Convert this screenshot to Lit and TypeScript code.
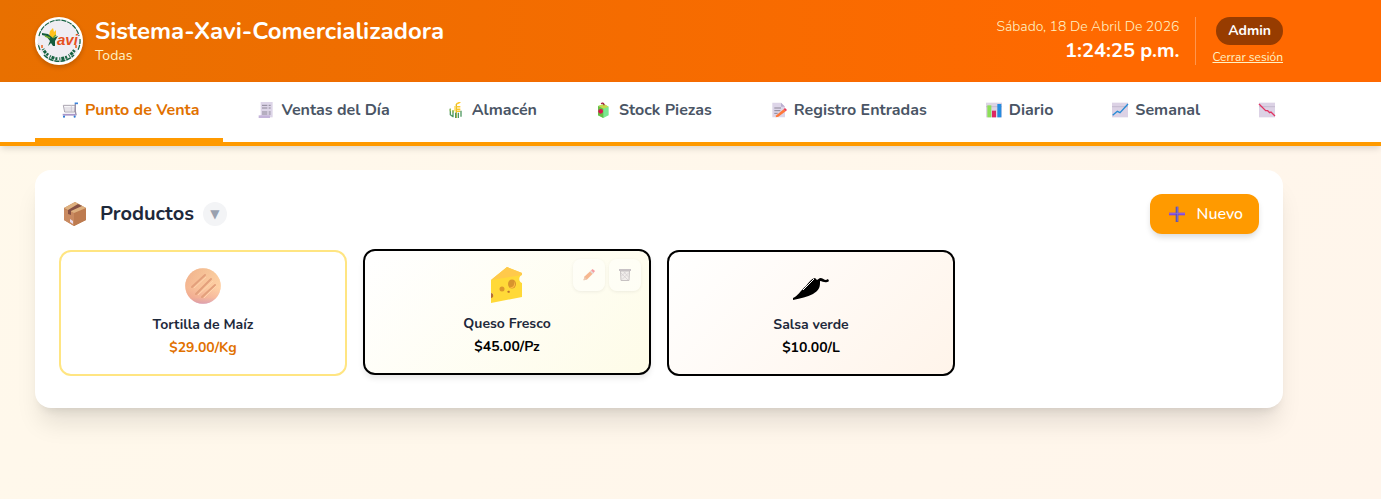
import { LitElement, html, css, svg, nothing } from "lit";
import { customElement, property, state } from "lit/decorators.js";

const art: Record<string, unknown> = {
  cart: svg`<path d="M2 5h18l-1 10H4z" fill="#f8f7f9" stroke="#aaa4b0" stroke-width="1.500"/><path d="M3 9h16M4 12h15M14 5v10" stroke="#c9c4cf" stroke-width="1.200"/><path d="M20 3v11l1 5H3" fill="none" stroke="#9b93a8" stroke-width="2"/><path d="M19 2h5" stroke="#3a83dc" stroke-width="2.500"/><path d="M1 19h20" stroke="#a997c9" stroke-width="2.500"/><circle cx="3" cy="22" r="1.600" fill="#2f7bd4"/><circle cx="19" cy="22" r="1.600" fill="#2f7bd4"/>`,
  receipt: svg`<path d="M4 0h18v23H4z" fill="#ddd5e8"/><path d="M1 20h17v4H1z" fill="#c4b4da"/><path d="M6 5h8M16 5h3M6 9h8M16 9h3M6 15h8M16 15h3M6 18h8M16 18h3" stroke="#8d8798" stroke-width="1.500"/>`,
  wheat: svg`<path d="M11 24V3" stroke="#d7b936" stroke-width="2"/><path d="M11 3l6-3M11 7h6M11 11h6M11 14h6" stroke="#ffc928" stroke-width="2.200"/><path d="M9 6v8" stroke="#ffd94b" stroke-width="2"/><path d="M2 10v9l4 3M6 13v10M10 16v8M14 16v8M18 13v9" fill="none" stroke="#4f9962" stroke-width="2"/><path d="M2 10v4M6 12v4" stroke="#9abf4c" stroke-width="2"/>`,
  box: svg`<path d="M3 6l9-3 7 4v13l-8 4-8-4z" fill="#79e890"/><path d="M3 6l9-3 7 4-8 3z" fill="#c7d94b"/><path d="M3 6l8 4v14l-8-4z" fill="#67bd46"/><circle cx="7" cy="14" r="3.500" fill="#d9154e"/><path d="M8 3c1-2 4-2 4 2" fill="none" stroke="#a41b3b" stroke-width="2"/>`,
  memo: svg`<path d="M2 1h13l6 6v16H2z" fill="#ddd5e8"/><path d="M15 1v6h6z" fill="#bbaed0"/><path d="M5 9h10M5 13h9M5 17h5" stroke="#8d8798" stroke-width="1.500"/><path d="M8 20l11-9 3 3-11 8-4 1z" fill="#ff783a"/><path d="M19 11l2-2 3 3-2 2z" fill="#ed3655"/>`,
  bars: svg`<path d="M0 1h24v22H0z" fill="#dcd4e4"/><path d="M0 7h24" stroke="#b9afc5"/><path d="M2 5h6v18H2z" fill="#8ddf58"/><path d="M9 13h6v10H9z" fill="#dc2762"/><path d="M17 3h6v20h-6z" fill="#258ce0"/>`,
  up: svg`<path d="M0 1h24v22H0z" fill="#dcd2e5"/><path d="M0 7h24" stroke="#b9afc5"/><path d="M1 20l7-6 4 2 12-13" fill="none" stroke="#268bd5" stroke-width="2"/>`,
  down: svg`<path d="M0 1h24v22H0z" fill="#dcd2e5"/><path d="M0 7h24" stroke="#b9afc5"/><path d="M0 3l10 10h3l3 3 2-1 6 6" fill="none" stroke="#e23361" stroke-width="2"/>`,
  parcel: svg`<path d="M1 6l11-6 11 6v12l-12 6L1 18z" fill="#bf7e53"/><path d="M1 7l10 4v13L1 18z" fill="#c98a61"/><path d="M11 11l12-5v12l-12 6z" fill="#bd7b50"/><path d="M1 6l11-6 11 6-12 5z" fill="#deb07f"/><path d="M5 12V8l10-6 4 2-11 5v4z" fill="#855044"/><path d="M7 17l3 2v3l-3-2z" fill="#eadff1"/>`,
  plus: svg`<path d="M0 12h24" stroke="#8448df" stroke-width="4"/><path d="M12 1v23" stroke="#5d55b3" stroke-width="4"/><path d="M13 1v22M0 11h24" stroke="#9875da" stroke-width="1"/>`,
  tortilla: svg`<defs><linearGradient id="t" x1="0" y1="0" x2="0" y2="1"><stop offset="0" stop-color="#f4b990"/><stop offset=".55" stop-color="#ffc6a1"/><stop offset=".82" stop-color="#f5a79a"/><stop offset="1" stop-color="#c982bd"/></linearGradient><linearGradient id="u"><stop offset="0" stop-color="#eaa884"/><stop offset="1" stop-color="#ffe4ad" stop-opacity=".8"/></linearGradient></defs><circle cx="18" cy="18" r="17.800" fill="url(#t)"/><circle cx="18" cy="18" r="17.800" fill="url(#u)" opacity=".5"/><path d="M7 19L20 7M11 26L26 11M17 29l13-12" stroke="#e3a07c" stroke-width="2" stroke-linecap="round"/><path d="M9 20L21 9M13 27L28 13M19 30l12-12" stroke="#ffd5ae" stroke-width="1"/>`,
  cheese: svg`<path d="M2 13L18 0l15 6v3l-2 3 2 4v14L2 36v-6c3 0 3-4 0-4z" fill="#ffd938"/><path d="M2 13L18 0l15 6v2z" fill="#ffc94b"/><ellipse cx="23" cy="17" rx="4" ry="4.500" fill="#d8942d"/><path d="M20 20c4 1 6-2 5-6 3 5-1 9-5 6z" fill="#ffba40"/><circle cx="13" cy="22" r="2.500" fill="#dc972c"/><path d="M18 25c2-3 4 0 2 1zM2 26c3 0 3 5 0 5z" fill="#b96f2e"/><path d="M34 8c-5 0-5 8 0 8z" fill="#fffdf3"/>`,
  chili: svg`<path d="M0 30c4-1 8-8 13-12 3-4 5-7 9-8l2 2 3-2c3 0 4 2 6 2l2-1 1 2c-4 3-6 0-9 0v2c0 5-2 8-7 11-6 3-12 4-20 6z" fill="#000"/><path d="M10 22L21 11" stroke="#fff" stroke-width="1"/>`,
  pencil: svg`<path d="M1 22l2-7L16 3l5 5L8 21z" fill="#ef732f"/><path d="M3 15l5 6-7 2z" fill="#d99a79"/><path d="M16 3l3-3 5 4-3 4z" fill="#ef3d51"/><path d="M14 5l2-2 5 5-2 2z" fill="#c9c1d2"/>`,
  bin: svg`<path d="M0 0h24v4H0z" fill="#92899d"/><path d="M3 4h18l-1 19H4z" fill="#e5e0e9" stroke="#918997" stroke-width="2"/><path d="M4 8l14 14M9 5l11 12M20 7L6 21M14 5l-9 9" stroke="#aaa1b2" stroke-width="1.500"/>`,
};

const icon = (name: string, size: number) => html`<svg
  class="icon"
  width=${size}
  height=${size}
  viewBox=${size === 36 ? "0 0 36 36" : "0 0 24 24"}
  aria-hidden="true"
>${art[name]}</svg>`;

interface Product {
  name: string;
  price: string;
  icon: string;
  tone: string;
}

@customElement("brand-logo")
class BrandLogo extends LitElement {
  static styles = css`
    :host { display: block; flex: none; width: 48px; height: 48px; border-radius: 50%; box-shadow: 0 2px 5px rgb(0 0 0 / 0.2); }
    svg { display: block; }
    .mark { font: italic bold 15px "Liberation Sans", sans-serif; fill: #e6501e; }
  `;
  render() {
    return html`<svg width="48" height="48" viewBox="0 0 48 48" role="img" aria-label="Xavi">
      <circle cx="24" cy="24" r="24" fill="#fff"/>
      <circle cx="24" cy="24" r="21.500" fill="#efedf3"/>
      <path d="M4 19a20.500 20.500 0 0 1 40 0M45 22a21 21 0 0 1-2 11M5 33l-2-6" fill="none" stroke="#176342" stroke-width="1.200" stroke-dasharray="5 1"/>
      <path d="M8 32a18 18 0 0 0 32 0" fill="none" stroke="#176342" stroke-width="3" stroke-dasharray="1 1 3 1 2 2"/>
      <path d="M9 38a21 21 0 0 0 30 0" fill="none" stroke="#176342" stroke-width="1.500" stroke-dasharray="5 1"/>
      <path d="M14 19l1-5 3-3 1 4 2-2v5l-3 3z" fill="#ffc21c"/>
      <path d="M7 16l6 1 5 4 5-2-3 5v5h-2l-2-3-3 3 2-5-4-5-4-1z" fill="#155c3c"/>
      <path d="M10 19l5 2M21 18l-3 3" stroke="#72a72d" stroke-width="1.500"/>
      <path d="M7 28v3M41 28v3" stroke="#e9621e" stroke-width="1.500"/>
      <text class="mark" x="22" y="28">avi</text>
    </svg>`;
  }
}

@customElement("product-card")
class ProductCard extends LitElement {
  @property({ attribute: false }) product!: Product;
  @property({ type: Boolean }) raised = false;
  static styles = css`
    :host { display: block; position: relative; min-width: 0; }
    .card { display: flex; flex-direction: column; align-items: center; width: 100%; box-sizing: border-box; padding: 16px; border: 2px solid #000; border-radius: 12px; background: #fff; font-family: inherit; color: #1e293b; cursor: pointer; }
    .corn { border-color: #ffe582; }
    .corn .price { color: #e17100; }
    .cheese { background: linear-gradient(135deg, #fff, #fefce8); }
    .salsa { background: linear-gradient(135deg, #fff, #fff4ea); }
    :host([raised]) { transform: translateY(-1px); }
    :host([raised]) .card { box-shadow: 0 4px 6px -1px rgb(0 0 0 / 0.1); }
    .icon { display: block; }
    .name { margin-top: 11px; font-size: 14px; line-height: 20px; font-weight: 700; }
    .price { margin-top: 3px; font-size: 14px; line-height: 20px; font-weight: 700; color: #000; }
    .tools { position: absolute; top: 10px; right: 10px; display: flex; gap: 4px; opacity: 0.5; }
    .tool { display: grid; place-items: center; width: 32px; height: 32px; padding: 0; border: 0; border-radius: 8px; background: rgb(255 255 255 / 0.8); box-shadow: 0 1px 3px rgb(0 0 0 / 0.12); cursor: pointer; }
  `;
  render() {
    const p = this.product;
    return html`<button class="card ${p.tone}">
        ${icon(p.icon, 36)}
        <span class="name">${p.name}</span>
        <span class="price">${p.price}</span>
      </button>
      ${this.raised
        ? html`<div class="tools">
            <button class="tool" aria-label="Editar">${icon("pencil", 12)}</button>
            <button class="tool" aria-label="Eliminar">${icon("bin", 12)}</button>
          </div>`
        : nothing}`;
  }
}

@customElement("app-root")
class AppRoot extends LitElement {
  @state() private active = 0;

  private tabs = [
    ["cart", "Punto de Venta"],
    ["receipt", "Ventas del Día"],
    ["wheat", "Almacén"],
    ["box", "Stock Piezas"],
    ["memo", "Registro Entradas"],
    ["bars", "Diario"],
    ["up", "Semanal"],
    ["down", ""],
  ];

  private products: Product[] = [
    { name: "Tortilla de Maíz", price: "$29.00/Kg", icon: "tortilla", tone: "corn" },
    { name: "Queso Fresco", price: "$45.00/Pz", icon: "cheese", tone: "cheese" },
    { name: "Salsa verde", price: "$10.00/L", icon: "chili", tone: "salsa" },
  ];

  static styles = css`
    :host { display: block; min-height: 100vh; font-family: Nunito, Lato, "Open Sans", sans-serif; color: #1e293b; background: linear-gradient(135deg, #fff9eb, #fff5eb); }
    .band { padding-right: 63px; }
    .wrap { box-sizing: border-box; max-width: 1280px; margin: 0 auto; padding: 0 16px; }
    .header { background: linear-gradient(90deg, #e87000, #ff6900 80%); color: #fff; }
    .bar { display: flex; align-items: center; justify-content: space-between; padding-block: 16px; }
    .brand, .session, .heading { display: flex; align-items: center; }
    .brand { gap: 12px; }
    .title { margin: 0; font-size: 24px; line-height: 30px; font-weight: 700; }
    .branch { margin: 0; font-size: 14px; line-height: 20px; color: #fef3c6; }
    .session { gap: 16px; }
    .clock { text-align: right; }
    .date { font-size: 14px; line-height: 20px; font-weight: 300; color: #fef3c6; }
    .time { font-size: 20px; line-height: 28px; font-weight: 700; }
    .user { display: flex; flex-direction: column; align-items: flex-end; gap: 4px; padding-left: 16px; border-left: 1px solid rgb(255 255 255 / 0.3); }
    .role { padding: 4px 12px; border-radius: 14px; background: #973c00; font-size: 14px; line-height: 20px; font-weight: 700; }
    .logout { font-size: 12px; line-height: 16px; color: #fef3c6; }
    .nav { background: #fff; border-bottom: 4px solid #ff9a00; box-shadow: 0 4px 6px -1px rgb(0 0 0 / 0.12); position: relative; }
    .tabs { display: flex; gap: 8px; overflow: hidden; }
    .tab { display: flex; flex: none; align-items: center; gap: 6px; padding: 16px 24px 16px 26px; border: 0; border-bottom: 4px solid transparent; background: none; font: 700 16px/24px Nunito, Lato, "Open Sans", sans-serif; color: #4a5565; white-space: nowrap; cursor: pointer; }
    .tab .icon { width: 18px; height: 16px; }
    .current { color: #e17100; border-bottom-color: #ff9a00; }
    .main { padding-block: 24px; }
    .panel { padding: 24px 24px 32px; border-radius: 16px; background: #fff; box-shadow: 0 20px 25px -5px rgb(0 0 0 / 0.1), 0 8px 10px -6px rgb(0 0 0 / 0.1); }
    .top { display: flex; align-items: center; justify-content: space-between; margin-bottom: 16px; }
    .heading { gap: 9px; }
    .heading .icon { margin: 0 4px; }
    .subject { margin: 0; font-size: 20px; line-height: 28px; font-weight: 700; }
    .fold { width: 24px; height: 24px; padding: 0; border: 0; border-radius: 50%; background: #f3f4f6; color: #99a1af; font: 12px/24px "DejaVu Sans", sans-serif; cursor: pointer; }
    .new { display: flex; align-items: center; gap: 12px; padding: 8px 16px 8px 19px; border: 0; border-radius: 12px; background: #ff9a00; box-shadow: 0 4px 6px -1px rgb(0 0 0 / 0.15); color: #fff; font: 500 16px/24px Nunito, Lato, "Open Sans", sans-serif; cursor: pointer; }
    .grid { display: grid; grid-template-columns: repeat(4, minmax(0, 1fr)); gap: 16px; }
  `;

  render() {
    return html`
      <header class="header band">
        <div class="wrap bar">
          <div class="brand">
            <brand-logo></brand-logo>
            <div>
              <h1 class="title">Sistema-Xavi-Comercializadora</h1>
              <p class="branch">Todas</p>
            </div>
          </div>
          <div class="session">
            <div class="clock">
              <div class="date">Sábado, 18 De Abril De 2026</div>
              <div class="time">1:24:25 p.m.</div>
            </div>
            <div class="user">
              <span class="role">Admin</span>
              <a class="logout" href="#">Cerrar sesión</a>
            </div>
          </div>
        </div>
      </header>
      <nav class="nav band">
        <div class="wrap">
          <div class="tabs">
            ${this.tabs.map(
              ([glyph, label], i) => html`<button
                class="tab ${i === this.active ? "current" : ""}"
                @click=${() => (this.active = i)}
              >${icon(glyph, 16)}${label ? html`<span>${label}</span>` : nothing}</button>`
            )}
          </div>
        </div>
      </nav>
      <main class="band">
        <div class="wrap main">
          <section class="panel">
            <div class="top">
              <div class="heading">
                ${icon("parcel", 24)}
                <h2 class="subject">Productos</h2>
                <button class="fold" aria-label="Contraer">▼</button>
              </div>
              <button class="new">${icon("plus", 16)}<span>Nuevo</span></button>
            </div>
            <div class="grid">
              ${this.products.map(
                (p, i) => html`<product-card .product=${p} ?raised=${i === 1}></product-card>`
              )}
            </div>
          </section>
        </div>
      </main>
    `;
  }
}
